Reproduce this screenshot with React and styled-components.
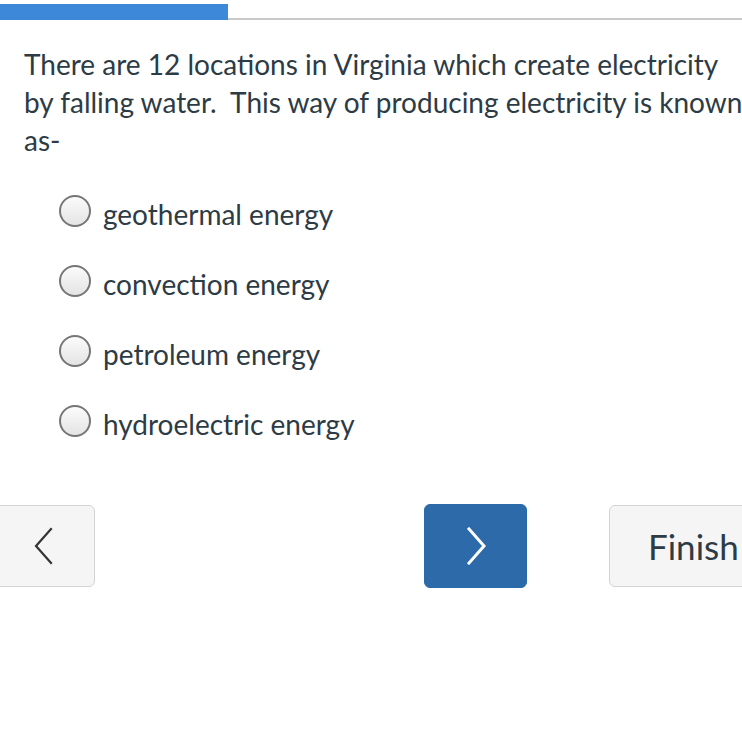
import React from "react";
import styled, { createGlobalStyle } from "styled-components";

const Global = createGlobalStyle`
  html, body { margin: 0; padding: 0; background: #fff; }
  body { width: 742px; height: 742px; overflow: hidden; font-family: Lato, "Open Sans", sans-serif; color: #2d3b45; }
`;

const Page = styled.div`
  width: 742px;
  height: 742px;
  overflow: hidden;
  position: relative;
`;

const Progress = styled.div`
  display: flex;
  align-items: flex-end;
  height: 20px;
`;

const ProgressFill = styled.div`
  width: 228px;
  height: 16px;
  background: #3d88d8;
`;

const ProgressTrack = styled.div`
  flex: 1;
  height: 2px;
  background: #c9c9c9;
`;

const Question = styled.p`
  margin: 25px 0 0 24px;
  width: 730px;
  font-size: 28px;
  line-height: 38px;
  white-space: nowrap;
`;

const Options = styled.div`
  display: flex;
  flex-direction: column;
  gap: 38px;
  margin: 39px 0 0 59px;
`;

const Option = styled.label`
  display: flex;
  align-items: center;
  gap: 12px;
  height: 32px;
  font-size: 28px;
`;

const Radio = styled.span`
  box-sizing: border-box;
  width: 32px;
  height: 32px;
  border-radius: 50%;
  border: 2px solid #767676;
  background: linear-gradient(#fbfbfb, #e4e4e4);
  margin-top: -6px;
  flex: none;
`;

const OptionText = styled.span`
  line-height: 32px;
`;

const Nav = styled.div`
  display: flex;
  align-items: center;
  margin: 64px 0 0 -8px;
`;

const NavButton = styled.button`
  box-sizing: border-box;
  flex: none;
  height: ${(p) => (p.$primary ? 84 : 82)}px;
  min-width: 103px;
  margin-right: ${(p) => p.$gap || 0}px;
  padding: 0 ${(p) => (p.$text ? 38 : 0)}px;
  display: flex;
  align-items: center;
  justify-content: center;
  border-radius: 6px;
  border: 1px solid ${(p) => (p.$primary ? "#2b6aa8" : "#d4d4d4")};
  background: ${(p) => (p.$primary ? "#2c6aa9" : "#f5f5f5")};
  color: ${(p) => (p.$primary ? "#fff" : "#2d3b45")};
  font-family: Lato, "Open Sans", sans-serif;
  font-size: 35px;
`;

const Chevron = ({ dir, color, width }) => (
  <svg width="24" height="38" viewBox="0 0 24 38" fill="none">
    <path
      d={dir === "left" ? "M19 2 L4 19 L19 36" : "M5 2 L20 19 L5 36"}
      stroke={color}
      strokeWidth={width}
      strokeLinecap="square"
      strokeLinejoin="miter"
    />
  </svg>
);

export default function App() {
  const options = [
    "geothermal energy",
    "convection energy",
    "petroleum energy",
    "hydroelectric energy",
  ];
  return (
    <Page>
      <Global />
      <Progress>
        <ProgressFill />
        <ProgressTrack />
      </Progress>
      <Question>
        There are 12 locations in Virginia which create electricity
        <br />
        by falling water.&nbsp; This way of producing electricity is known
        <br />
        as-
      </Question>
      <Options>
        {options.map((o) => (
          <Option key={o}>
            <Radio />
            <OptionText>{o}</OptionText>
          </Option>
        ))}
      </Options>
      <Nav>
        <NavButton $gap={329} aria-label="Previous">
          <Chevron dir="left" color="#333" width={2.2} />
        </NavButton>
        <NavButton $primary $gap={82} aria-label="Next">
          <Chevron dir="right" color="#fff" width={3} />
        </NavButton>
        <NavButton $text>Finish</NavButton>
      </Nav>
    </Page>
  );
}
